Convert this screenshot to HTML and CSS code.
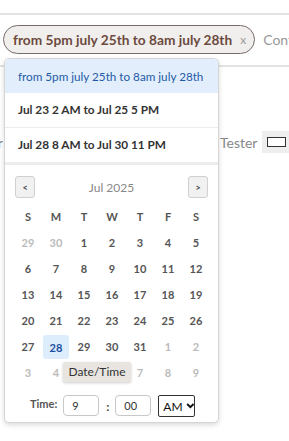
FILE: index.html
```html
<!DOCTYPE html>
<html lang="en">

<head>
    <meta charset="UTF-8">
    <meta name="viewport" content="width=device-width, initial-scale=1.0">
    <title>Date filter</title>

    <link rel="stylesheet" href="styles.css">
</head>

<body>
    <div class="topline"></div>

    <div class="tagbar">
        <span class="chip">from 5pm july 25th to 8am july 28th <span class="chip-x">x</span></span>
        <span class="tag-input">Contains</span>
    </div>

    <div class="page">
        <div class="fieldrow">
            <div class="cut"><span>Reporter</span></div>
            <span class="field-label">Tester</span>
            <span class="field-box"><span class="field-check"></span></span>
        </div>
    </div>

    <div class="bottomline"></div>

    <!-- suggestions dropdown -->
    <div class="dropdown">
        <div class="item active">from 5pm july 25th to 8am july 28th</div>
        <div class="item">Jul 23 2 AM to Jul 25 5 PM</div>
        <div class="item last">Jul 28 8 AM to Jul 30 11 PM</div>

        <div class="cal">
            <div class="cal-head">
                <button class="nav">&lt;</button>
                <span class="month">Jul 2025</span>
                <button class="nav">&gt;</button>
            </div>

            <div class="grid">
                <span class="wd">S</span><span class="wd">M</span><span class="wd">T</span><span class="wd">W</span><span class="wd">T</span><span class="wd">F</span><span class="wd">S</span>

                <span class="day out">29</span><span class="day out">30</span><span class="day">1</span><span class="day">2</span><span class="day">3</span><span class="day">4</span><span class="day">5</span>
                <span class="day">6</span><span class="day">7</span><span class="day">8</span><span class="day">9</span><span class="day">10</span><span class="day">11</span><span class="day">12</span>
                <span class="day">13</span><span class="day">14</span><span class="day">15</span><span class="day">16</span><span class="day">17</span><span class="day">18</span><span class="day">19</span>
                <span class="day">20</span><span class="day">21</span><span class="day">22</span><span class="day">23</span><span class="day">24</span><span class="day">25</span><span class="day">26</span>
                <span class="day">27</span><span class="day sel">28</span><span class="day">29</span><span class="day">30</span><span class="day">31</span><span class="day out">1</span><span class="day out">2</span>
                <span class="day out">3</span><span class="day out">4</span><span class="day out">5</span><span class="day out">6</span><span class="day out">7</span><span class="day out">8</span><span class="day out">9</span>
            </div>

            <div class="time">
                <span class="time-label">Time:</span>
                <span class="tbox">9</span>
                <span class="colon">:</span>
                <span class="tbox">00</span>
                <span class="ampm">AM
                    <svg width="11" height="8" viewBox="0 0 11 8"><path d="M1.5 1.5 L5.5 5.5 L9.5 1.5" fill="none" stroke="#111" stroke-width="2.4"/></svg>
                </span>
            </div>
        </div>

        <div class="tooltip">Date/Time</div>
    </div>
</body>

</html>
```

FILE: styles.css
```css
html {
font-family: Lato, "Open Sans", sans-serif;
}

body {
margin: 0;
background-color: #fff;
color: #333;
position: relative;
overflow: hidden;
}

.topline {
height: 13px;
border-bottom: 2px solid #e2e2e2;
}

.tagbar {
display: flex;
align-items: center;
gap: 8px;
padding: 10px 0 11px 3px;
height: 29px;
border-bottom: 2px solid #e2e2e2;
white-space: nowrap;
}

.chip {
box-sizing: border-box;
height: 29px;
display: flex;
align-items: center;
padding: 0 8px 0 9px;
border: 1px solid #786b67;
border-radius: 15px;
background-color: #f1efed;
color: #6c4a3e;
font-weight: bold;
font-size: 13.7px;
flex-shrink: 0;
}

.chip-x {
color: #999;
font-weight: normal;
font-size: 12px;
margin-left: 8px;
}

.tag-input {
flex: 1;
overflow: hidden;
color: #999;
font-size: 14px;
}

.page {
height: 357px;
}

.fieldrow {
display: flex;
align-items: center;
margin-top: 64px;
height: 22px;
font-size: 14px;
color: #888;
}

.cut {
width: 3px;
overflow: hidden;
display: flex;
justify-content: flex-end;
white-space: nowrap;
}

.field-label {
margin-left: 217px;
}

.field-box {
margin-left: 5px;
width: 27px;
height: 22px;
background-color: #eee;
display: flex;
align-items: center;
padding-left: 5px;
box-sizing: border-box;
}

.field-check {
width: 17px;
height: 8px;
border: 1px solid #333;
background-color: #fff;
}

.bottomline {
border-top: 1px solid #ddd;
}

.dropdown {
position: absolute;
left: 4px;
top: 58px;
width: 213px;
height: 363px;
border: 1px solid #d6d6d6;
border-radius: 5px;
background-color: #fff;
box-shadow: 0 2px 5px rgba(0, 0, 0, 0.15);
}

.item {
height: 34px;
line-height: 34px;
padding-left: 13px;
font-size: 11.8px;
font-weight: bold;
color: #333;
border-bottom: 1px solid #ececec;
white-space: nowrap;
}

.item.active {
background-color: #e2eefc;
color: #1f5aa6;
font-weight: normal;
font-size: 11.7px;
border-bottom: none;
border-radius: 5px 5px 0 0;
}

.item.last {
border-bottom: 3px solid #ececec;
}

.cal {
padding: 11px 9px 0 9px;
}

.cal-head {
display: flex;
align-items: center;
justify-content: space-between;
height: 22px;
padding: 0 1px;
}

.nav {
width: 20px;
height: 22px;
padding: 0;
border: 1px solid #d0d0d0;
border-radius: 3px;
background-color: #f1f1f1;
font-size: 9px;
font-weight: bold;
color: #444;
font-family: inherit;
}

.month {
color: #888;
font-size: 12px;
}

.grid {
display: grid;
grid-template-columns: repeat(7, 28px);
grid-auto-rows: 26px;
margin-top: 5px;
}

.wd,
.day {
display: flex;
align-items: center;
justify-content: center;
font-size: 11px;
font-weight: bold;
color: #555;
}

.day.out {
color: #bbb;
}

.day.sel {
background-color: #deedfc;
color: #1c4fa0;
border-radius: 3px;
margin: 2px 1px 0 1px;
}

.time {
display: flex;
align-items: center;
margin-top: 8px;
padding-left: 16px;
font-size: 11px;
}

.time-label {
font-weight: bold;
color: #555;
margin-top: -4px;
}

.tbox {
box-sizing: border-box;
width: 36px;
height: 21px;
border: 1px solid #c8c8c8;
border-radius: 4px;
padding-left: 8px;
line-height: 19px;
font-size: 11px;
color: #333;
margin-left: 6px;
}

.colon {
font-weight: bold;
font-size: 12px;
color: #444;
margin: 3px 0 0 7px;
}

.ampm {
box-sizing: border-box;
display: flex;
align-items: center;
gap: 3px;
height: 22px;
width: 37px;
margin-left: 7px;
margin-top: 2px;
padding-left: 4px;
border: 1px solid #333;
border-radius: 2px;
font-size: 12px;
color: #111;
}

.tooltip {
position: absolute;
left: 58px;
top: 303px;
width: 68px;
height: 20px;
line-height: 20px;
text-align: center;
background-color: #e8e5e1;
color: #333;
font-size: 12px;
border-radius: 2px;
box-shadow: 0 1px 3px rgba(0, 0, 0, 0.2);
}
```
